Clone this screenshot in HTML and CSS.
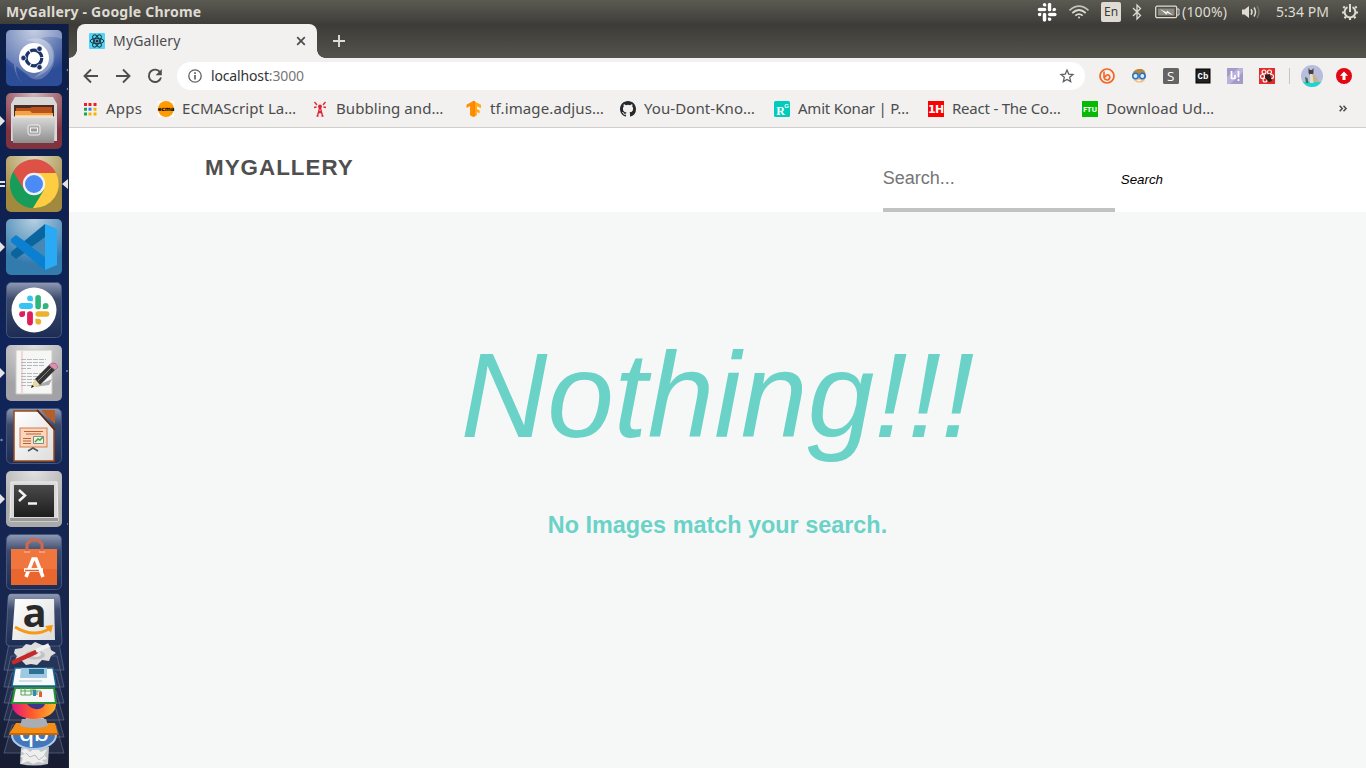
FILE: index.html
```html
<!DOCTYPE html>
<html lang="en">
<head>
<meta charset="utf-8">
<title>MyGallery</title>
<link rel="stylesheet" href="styles.css">
</head>
<body>
<svg class="defs" width="0" height="0" aria-hidden="true">
  <defs>
    <linearGradient id="glass" x1="0" y1="0" x2="0" y2="1"><stop offset="0" stop-color="#8f9ab5"/><stop offset=".3" stop-color="#3c4a6c"/><stop offset="1" stop-color="#1c2c54"/></linearGradient>
    <linearGradient id="metal" x1="0" y1="0" x2="0" y2="1"><stop offset="0" stop-color="#d9d9d9"/><stop offset="1" stop-color="#8d8d8d"/></linearGradient>
    <linearGradient id="screen" x1="0" y1="0" x2="0" y2="1"><stop offset="0" stop-color="#4a4a4a"/><stop offset="1" stop-color="#1d1d1d"/></linearGradient>
    <linearGradient id="paper" x1="0" y1="0" x2="1" y2="1"><stop offset="0" stop-color="#fff"/><stop offset="1" stop-color="#ddd"/></linearGradient>
    <linearGradient id="fox" x1="0" y1="0" x2="1" y2="0"><stop offset="0" stop-color="#e31587"/><stop offset=".45" stop-color="#ff5a2a"/><stop offset="1" stop-color="#ffb52b"/></linearGradient>
    <radialGradient id="glow" cx=".5" cy="0" r=".8"><stop offset="0" stop-color="#fff" stop-opacity=".65"/><stop offset="1" stop-color="#fff" stop-opacity="0"/></radialGradient>
    <g id="slack">
      <rect x="1.300" y="-15" width="5.600" height="14.200" rx="2.800" class="s-green"/>
      <rect x="1.400" y="1.200" width="14" height="5.600" rx="2.800" class="s-yellow"/>
      <rect x="-6.900" y="1.200" width="5.800" height="14.200" rx="2.800" class="s-red"/>
      <rect x="-15" y="-6.900" width="14" height="5.800" rx="2.800" class="s-blue"/>
      <path class="s-green" d="M8.800-1.100v-3a2.900 2.900 0 1 1 3 3z"/>
      <path class="s-yellow" d="M1.400 8.800h3a2.900 2.900 0 1 1-3 3z"/>
      <path class="s-red" d="M-9 1.200v3a2.900 2.900 0 1 1-3-3z"/>
      <path class="s-blue" d="M-1.100-8.800h-3a2.900 2.900 0 1 1 3-3z"/>
    </g>
  </defs>
</svg>

<header class="panel">
  <span class="panel-title">MyGallery - Google Chrome</span>
  <div class="tray">
    <svg class="tray-slack" width="20" height="20" viewBox="-16 -16 32 32"><use href="#slack"/></svg>
    <svg class="tray-wifi" width="22" height="16" viewBox="0 0 22 16" fill="none" stroke="#dfdbd2" stroke-width="1.700"><path d="M1.500 6.300q9.500-8.200 19 0" stroke="#c5c1b9"/><path d="M4.300 9q6.700-6 13.400 0M7.300 11.700q3.700-3.300 7.400 0"/><circle cx="11" cy="13.600" r="1" fill="#dfdbd2" stroke="none"/></svg>
    <span class="lang">En</span>
    <svg class="tray-bt" width="10" height="18" viewBox="0 0 10 18" fill="none" stroke="#dfdbd2" stroke-width="1.300"><path d="M1 5l7.500 7.500L5 16V2l3.500 3.500L1 13"/></svg>
    <svg class="tray-batt" width="25" height="14" viewBox="0 0 25 14"><rect x=".7" y="1.200" width="21" height="11.500" rx="1.500" fill="none" stroke="#dfdbd2" stroke-width="1.300"/><path d="M22 4h2v6h-2" fill="none" stroke="#dfdbd2"/><path d="M3 3.500h16.500v7H3z" fill="#8c8982"/><path d="M5 4l6.500 3.200.5-1.800L18.500 10.500l-6.200-2.400-.8 1.700z" fill="#f4f1ea"/></svg>
    <span class="tray-pct">(100%)</span>
    <svg class="tray-vol" width="20" height="16" viewBox="0 0 20 16" fill="none" stroke="#dfdbd2" stroke-width="1.500"><path d="M1 5.500h2.500L8 2v12l-4.500-3.500H1z" fill="#dfdbd2" stroke="none"/><path d="M10 5.200q2 2.800 0 5.600M13 3.500q3 4.500 0 9"/><path d="M16 1.800q4 6.200 0 12.400" stroke="#77746d"/></svg>
    <span class="tray-time">5:34 PM</span>
    <svg class="tray-gear" width="18" height="18" viewBox="-9 -9 18 18" fill="none" stroke="#dfdbd2"><path d="M-2.500-4.800a5.400 5.400 0 1 0 5 0" stroke-width="2"/><path d="M0-8V0" stroke-width="2"/><path d="M5.200-4.200l1.500-1.300M6 .5h2M4 4.500l1.500 1.700M0 6v2M-4 4.500l-1.500 1.700M-6 .5h-2M-5.200-4.200l-1.500-1.300" stroke-width="2.200"/></svg>
  </div>
</header>

<div class="desktop">
  <aside class="launcher">
    <svg class="tile" viewBox="0 0 56 56"><rect width="56" height="56" rx="5" fill="#2e4d98"/><path d="M0 28V5q0-5 5-5h46q5 0 5 5v4Q32 0 13 28q-8 14 6 28Q4 42 9 25 17 5 35 9q18 5 12 27Q38 54 25 48" fill="#c5cfe8" opacity=".3"/><path d="M20 10q22-7 27 13 3 17-19 25Q44 36 38 22 33 11 20 10" fill="#fff" opacity=".25"/><rect width="56" height="56" rx="5" fill="url(#glow)"/><circle cx="28" cy="28" r="15" fill="#fff"/><circle cx="28" cy="28" r="7.800" fill="none" stroke="#1d3469" stroke-width="3.200" stroke-dasharray="15.300 1"/><g fill="#1d3469" stroke="#fff" stroke-width=".7"><circle cx="17.500" cy="28" r="2.700"/><circle cx="33.500" cy="18.800" r="2.700"/><circle cx="33.500" cy="37.200" r="2.700"/></g></svg>
    <svg class="tile" viewBox="0 0 56 56"><rect width="56" height="56" rx="5" fill="#81323f"/><rect width="56" height="56" rx="5" fill="url(#glow)"/><path d="M9 4h38l4 7v37H5V11z" fill="#d8d8d8"/><path d="M8 12h40v14H8z" fill="#4a2d20"/><path d="M10 15h14l2-1h20v12H10z" fill="#b9531e"/><path d="M9 18h15l2 2h21v6H9z" fill="#f3a14b"/><path d="M9 22h38v4H9z" fill="#ffd187"/><path d="M6 24h43l-1 26H7z" fill="url(#metal)"/><path d="M6 24h43" stroke="#eee"/><rect x="22" y="32" width="12" height="10" rx="2" fill="#aaa" stroke="#eee"/><rect x="24.500" y="35" width="7" height="4" fill="#999" stroke="#f5f5f5"/></svg>
    <svg class="tile" viewBox="0 0 56 56"><rect width="56" height="56" rx="5" fill="#a18a3e"/><rect width="56" height="56" rx="5" fill="url(#glow)"/><circle cx="28" cy="28" r="24" fill="#179d59"/><path d="M28 28L7.200 16A24 24 0 0 1 50 17z" fill="#de5146"/><path d="M28 17h22a24 24 0 0 1-23 35l11-18z" fill="#ffcd42"/><path d="M7.300 16L18 34l10-6-8-12z" fill="#de5146"/><path d="M7.300 16L18 34l9 18A24 24 0 0 1 7.300 16z" fill="#179d59"/><circle cx="28" cy="28" r="11.200" fill="#f1f1f1"/><circle cx="28" cy="28" r="9" fill="#4c8bf5"/></svg>
    <svg class="tile" viewBox="0 0 56 56"><rect width="56" height="56" rx="5" fill="#347bad"/><rect width="56" height="56" rx="5" fill="url(#glow)"/><path d="M39 5v14L10 40l-5-4v-3z" fill="#0a659f"/><path d="M39 51V37L10 16l-5 4v3z" fill="#0b7fd0"/><path d="M39 5l12 5v36l-12 5z" fill="#2aaaf4"/><path d="M39 18v20L25.500 28z" fill="#4588b5"/></svg>
    <svg class="tile" viewBox="0 0 56 56"><rect x=".5" y=".5" width="55" height="55" rx="5" fill="url(#glass)" stroke="#46557a"/><circle cx="28" cy="28" r="22.500" fill="#fff"/><use href="#slack" transform="translate(28 28)"/></svg>
    <svg class="tile" viewBox="0 0 56 56"><rect width="56" height="56" rx="5" fill="#a3a3a7"/><rect width="56" height="56" rx="5" fill="url(#glow)"/><path d="M10 5h36v44H10z" fill="#f6f6f4" stroke="#c9c9c5"/><path d="M16 6v42" stroke="#f0b6b6"/><g stroke="#b3b8c1"><path d="M15 14.500h25M15 17.500h24M15 20.500h24M15 23.500h10M15 28.500h25M15 31.500h20M15 34.500h18M15 37.500h14M15 40.500h12" stroke-dasharray="5 1"/></g><path d="M28 42l18-8-3 6z" fill="#aaa"/><path d="M25 43l4-9 5 6z" fill="#e9d9a0"/><path d="M29 34l14-14 6 5-15 15z" fill="#343434"/><path d="M32 36l14-14" stroke="#888"/><path d="M43 20l3-2q4-1 6 4l-3 3z" fill="#df8db3" stroke="#99637a" stroke-width=".7"/><path d="M25 43l1-3 2 1.500z" fill="#111"/></svg>
    <svg class="tile" viewBox="0 0 56 56"><rect x=".5" y=".5" width="55" height="55" rx="5" fill="url(#glass)" stroke="#46557a"/><path d="M8 3h24l16 18v32H8z" fill="url(#paper)" stroke="#9b4a1c" stroke-width="1.500"/><path d="M35 2h14v14z" fill="#b65e27"/><path d="M31 2l18 20" stroke="#5c2a14" stroke-width="1.800"/><rect x="14" y="20" width="27" height="19" fill="#fbd6bd" stroke="#d37b4b"/><path d="M18 23.500h19M20 26h15M17 30.500h8M17 33h8M17 35.500h8" stroke="#bd6132" stroke-width="1.200"/><path d="M27.500 28.500h10v7h-10z" fill="#e9f5df" stroke="#888"/><path d="M29 34l3-3 2 1 3-3" stroke="#39a845" stroke-width="1.500" fill="none"/><path d="M22 43l5-3 5 3" stroke="#555" fill="none" stroke-width="1.600"/></svg>
    <svg class="tile" viewBox="0 0 56 56"><rect width="56" height="56" rx="5" fill="#aaa"/><rect width="56" height="56" rx="5" fill="url(#glow)"/><path d="M5 11h46l1 39H4z" fill="#d9d9d7" stroke="#eee"/><path d="M4 47h48v3H4z" fill="#999"/><path d="M8 14h40v32H8z" fill="url(#screen)"/><path d="M13 19l6 5.500-6 5.500M22 32.500h9" fill="none" stroke="#f3f3f3" stroke-width="2.500"/></svg>
    <svg class="tile" viewBox="0 0 56 56"><rect x=".5" y=".5" width="55" height="55" rx="5" fill="url(#glass)" stroke="#46557a"/><path d="M5 15h46v36H5z" fill="#ea662f"/><path d="M5 15h46v20H5z" fill="#f58049" opacity=".6"/><path d="M21 18V10l4-4h7l4 4v8" fill="none" stroke="#d0684a" stroke-width="3"/><path d="M18 18h6M33 18h6" stroke="#fa9c77" stroke-width="2"/><path d="M20 43L27 25h3l7 18M21 36h16" fill="none" stroke="#fff" stroke-width="3.500"/><path d="M18 36h16" stroke="#fff" stroke-width="3.500"/><path d="M19 36.500h14" stroke="#e46430" stroke-width="1.500"/></svg>
    <svg class="stack" viewBox="0 594 68 174">
      <g stroke="#7684a0" stroke-opacity=".5" fill="#8c9bbd" fill-opacity=".13"><path d="M12 725h44l8 28H4zM12 709h44l8 28H4zM12 691h44l8 29H4zM12 673h44l8 30H4zM11 656h46l7 31H4zM10 638h48l6 32H4z"/><path d="M11 594h46q3 0 3 5l2 43q0 4-4 4H10q-4 0-4-4l2-43q0-5 3-5z" fill="url(#glass)" fill-opacity="1"/></g>
      <path d="M15 599h39l1 41H12z" fill="url(#paper)"/>
      <text x="22.500" y="627" class="amazon">a</text>
      <path d="M15 627q18 11 34 2" fill="none" stroke="#f69a16" stroke-width="3"/><path d="M45 626l8-1-2 8z" fill="#f69a16"/>
      <path d="M21 748l28-1-1 17q-14 3-28 0z" fill="#c3c6c8"/><path d="M21 751l5-3 4 4 6-5 5 5 6-3-3 6 3 4-5 1 3 3-7-1-5 2-5-3-7 3 2-6-3-2 5-2z" fill="#eee"/><path d="M26 753l4 4 5-2 4 5 5-4" fill="none" stroke="#b5b9bb"/>
      <clipPath id="qb-clip"><path d="M10 735h48v16H10z"/></clipPath>
      <g clip-path="url(#qb-clip)"><ellipse cx="34" cy="735" rx="22" ry="14" fill="#4278bb" stroke="#b1cae8" stroke-width="2"/><text x="19" y="741" class="qb">qb</text></g>
      <path d="M26 718h18l3 9H22z" fill="#bfc1c4"/><path d="M23 723h24l2 5H20z" fill="#e5e5e5"/><path d="M16 723h39l3 11H9z" fill="#f58c13"/><path d="M22 719h24l2 7q-14 4-28 0z" fill="#a9adb4"/><path d="M9 733h49v2H9z" fill="#c96500"/>
      <path d="M12 704h44q0 10-14 14-8 2-16 0-14-4-14-14z" fill="url(#fox)"/><path d="M27 704h18q-2 6-10 5-5-1-8-5z" fill="#40358b"/>
      <path d="M15 688h39l2 15H12z" fill="#f7f7f7" stroke="#279334" stroke-width="2"/><path d="M21 688v7h10v-7M21 691h10M25 688v7M32 695v-5h4v5M37 695v-4h4v4" fill="none" stroke="#58a75a"/><path d="M33 690h3v6h-3z" fill="#3688b9"/><path d="M39 692h3v5h-3z" fill="#e35e36"/>
      <path d="M15 668h38l3 18H12z" fill="#f7f9fa" stroke="#1a6896" stroke-width="1.500"/><path d="M21 668h26v10H20z" fill="#9fc9e3"/><path d="M29 669h15v5H29z" fill="#2d7296"/><path d="M19 681h23" stroke="#b3c5d2"/>
      <path d="M15 649l7-1 4-4 5 1 4-3 7 3 8 1 1 4 5 3-5 3-2 5-7-1-5 5-6-1-5 1-4-4-7-1 2-4-3-3z" fill="#dedede"/><ellipse cx="35" cy="655" rx="10" ry="4.500" fill="#c2c2c2"/><ellipse cx="36" cy="654" rx="5" ry="3" fill="#e7e7e7"/><path d="M14 662l22-10" stroke="#c52a2a" stroke-width="4.500" stroke-linecap="round"/><path d="M36 651l13-6" stroke="#f1f1f1" stroke-width="4"/>
    </svg>
    <div class="marks">
      <svg width="69" height="744" viewBox="0 24 69 744"><g fill="#e4e4e4"><path d="M0 116l5 5-5 5zM0 242l5 5-5 5zM0 368l5 5-5 5zM0 494l5 5-5 5zM0 181h5v2H0zM0 185h5v2H0zM68 179l-6 5 6 5z"/></g><g fill="#6794c8"><circle cx="68" cy="70" r="1.300"/><circle cx="68" cy="89" r="1.300"/><circle cx="1.500" cy="440" r="1.200"/><circle cx="67" cy="371" r="1"/><circle cx="68" cy="524" r="1"/></g></svg>
    </div>
  </aside>

  <main class="browser">
    <div class="tabs">
      <div class="tab">
        <svg width="16" height="16" viewBox="-8 -8 16 16"><rect x="-8" y="-8" width="16" height="16" rx="1" fill="#50d5f9"/><g fill="none" stroke="#20333b" stroke-width="1"><ellipse rx="6.800" ry="2.700"/><ellipse rx="6.800" ry="2.700" transform="rotate(60)"/><ellipse rx="6.800" ry="2.700" transform="rotate(120)"/></g><circle r="1.500" fill="#20333b"/></svg>
        <span class="tab-name">MyGallery</span>
        <svg width="10" height="10" viewBox="0 0 10 10" stroke="#4a4b4b" stroke-width="1.700"><path d="M1.200 1.200l7.600 7.600M8.800 1.200L1.200 8.800"/></svg>
      </div>
      <svg class="plus" width="12" height="12" viewBox="0 0 12 12" stroke="#deded9" stroke-width="1.900"><path d="M6 0v12M0 6h12"/></svg>
    </div>

    <div class="toolbar">
      <svg class="nav" viewBox="0 0 16 16"><path d="M15 8H2M8 1.500L1.500 8 8 14.500"/></svg>
      <svg class="nav" viewBox="0 0 16 16"><path d="M1 8h13M8 1.500L14.500 8 8 14.500"/></svg>
      <svg class="nav" viewBox="0 0 16 16"><path d="M13.300 4.500A6.200 6.200 0 1 0 14 9.500"/><path d="M14.800 1v6.200H8.600z" class="solid"/></svg>
      <div class="address">
        <svg width="14" height="14" viewBox="0 0 14 14" fill="none" stroke="#5f6163" stroke-width="1.300"><circle cx="7" cy="7" r="6.200"/><path d="M7 6v4.500M7 3.300v1.600" stroke-width="1.700"/></svg>
        <span class="url">localhost<span class="port">:3000</span></span>
        <svg class="star" width="14" height="14" viewBox="0 0 14 14" fill="none" stroke="#5f6163" stroke-width="1.300"><path d="M7 1.100l1.700 4 4.300.4-3.300 2.800 1 4.300L7 10.400l-3.700 2.200 1-4.300L1 5.500l4.300-.4z"/></svg>
      </div>
      <div class="extensions">
        <svg viewBox="0 0 16 16"><circle cx="8" cy="8" r="7" fill="none" stroke="#f26522" stroke-width="1.700"/><path d="M5 3.500v6.200q1 2.600 3.600 2.300 2.400-.7 2.200-3.200-.7-2.300-3-1.800-1.600.6-1.300 2.500" fill="none" stroke="#f26522" stroke-width="1.600"/></svg>
        <svg viewBox="0 0 16 16"><path d="M1 9Q1 2 7 1h4q4 2 4 8l-1 2H2z" fill="#b8863a"/><path d="M3 6h10l1 6-3 2.500H6L2.500 12z" fill="#f4bd86"/><circle cx="4.500" cy="8" r="2.700" fill="#d9efff" stroke="#2375cf" stroke-width="1.500"/><circle cx="11.300" cy="8" r="2.700" fill="#d9efff" stroke="#2375cf" stroke-width="1.500"/><path d="M6 12q2 1.500 4 0" fill="none" stroke="#fff"/></svg>
        <svg viewBox="0 0 16 16"><rect width="16" height="16" rx="1.500" fill="#646464"/><text x="4" y="13" class="ext-s">S</text></svg>
        <svg viewBox="0 0 16 16"><rect x="1" y="1" width="14" height="14" fill="#222" stroke="#000"/><text x="2.500" y="11" class="ext-cb">Cb</text></svg>
        <svg viewBox="0 0 16 16"><rect width="16" height="16" fill="#a69aca"/><path d="M0 9L12 0h4v4L3 16H0z" fill="#bdb2da"/><path d="M4.500 3v8M8 7v4M11.500 3v6.500M4.500 10.500h3.500M11.500 11v2" stroke="#fff" stroke-width="1.700" fill="none"/></svg>
        <svg viewBox="0 0 16 16"><rect width="16" height="16" fill="#e02d2b"/><g fill="none" stroke="#fff" stroke-width="1.100"><circle cx="5" cy="4" r="2"/><circle cx="10.500" cy="4" r="2"/><circle cx="3.500" cy="8.500" r="2"/><circle cx="12.500" cy="8.500" r="2"/><circle cx="6" cy="12" r="2"/></g><path d="M6 7l5-1 2 7-3 1-4-4z" fill="#321f1d"/></svg>
      </div>
      <svg class="avatar" viewBox="0 0 22 22"><clipPath id="round"><circle cx="11" cy="11" r="11"/></clipPath><g clip-path="url(#round)"><path d="M0 0h22v22H0z" fill="#b8bdde"/><path d="M0 17h22v5H0z" fill="#20d4cf"/><path d="M9 9l3-1 5 6 1 3H9z" fill="#c3b48d"/><path d="M7.500 3l1.500 2h2l1.500-2v5l-1.500 2H9L7.500 8z" fill="#48403d"/><path d="M4 12l2.500 1 1 5H5z" fill="#39744a"/><path d="M9 9h2.500l1 9H9z" fill="#e5dec6"/></g></svg>
      <svg class="update" width="16" height="16" viewBox="0 0 16 16"><circle cx="8" cy="8" r="8" fill="#e30613"/><path d="M8 3.500l4 4.300H9.500V12h-3V7.800H4z" fill="#fff"/></svg>
    </div>

    <nav class="bookmarks">
      <div class="mark apps"><svg viewBox="0 0 16 16"><path fill="#ea1d2c" d="M2 2h3v3H2zM6.500 2h3v3h-3zM11.500 2h3v3h-3z"/><path fill="#16a45b" d="M2 6.700h3v3H2zM2 11.500h3v3H2z"/><path fill="#3e7de9" d="M6.500 6.700h3v3h-3z"/><path fill="#f5b400" d="M11.500 6.700h3v3h-3zM6.500 11.500h3v3h-3zM11.500 11.500h3v3h-3z"/></svg><span class="t-apps">Apps</span></div>
      <div class="mark"><svg viewBox="0 0 16 16"><rect width="16" height="16" fill="#fff"/><circle cx="8" cy="8" r="8" fill="#ff9b00"/><text x="8" y="10" class="fav-ecma">ecma</text></svg><span class="t-ecma">ECMAScript La…</span></div>
      <div class="mark"><svg viewBox="0 0 16 16" fill="none" stroke="#df2333" stroke-width="1.300"><path d="M8 5L5.500 15M8 5l2.500 10M6.500 10L10.500 13M9.500 10L5.500 13M4.500 15h2M9.500 15h2M5 4L2.500 1M11 4l2.500-3M4.500 6L2 6.500M11.500 6l2.500.5"/><circle cx="8" cy="5.500" r="1.300" fill="#df2333"/></svg><span class="t-bub">Bubbling and…</span></div>
      <div class="mark"><svg viewBox="0 0 16 16"><path d="M7 0v16l-3-1.800V5L.5 7V3.800z" fill="#ff8f00"/><path d="M8 0l7 3.800V7.200l-4-2V8l2.700 1.500v3L11 11v3.300L8 16z" fill="#ffab1a"/><path d="M7 0h2v15l-2 1z" fill="#ff8500"/></svg><span class="t-tf">tf.image.adjus…</span></div>
      <div class="mark"><svg viewBox="0 0 16 16"><path fill="#24292e" d="M8 0C3.580 0 0 3.580 0 8c0 3.540 2.290 6.530 5.470 7.590.4.070.55-.17.55-.38 0-.19-.01-.82-.01-1.490-2.010.37-2.530-.49-2.690-.94-.09-.23-.48-.94-.82-1.130-.28-.15-.68-.52-.01-.53.63-.01 1.080.58 1.230.82.72 1.210 1.870.87 2.330.66.07-.52.28-.87.510-1.070-1.780-.2-3.640-.89-3.640-3.950 0-.87.310-1.590.82-2.150-.08-.2-.36-1.020.08-2.120 0 0 .67-.21 2.200.82a7.600 7.600 0 0 1 4 0c1.530-1.040 2.200-.82 2.200-.82.44 1.100.16 1.920.08 2.120.51.56.82 1.270.82 2.150 0 3.070-1.870 3.750-3.650 3.950.29.25.54.73.54 1.480 0 1.070-.01 1.930-.01 2.200 0 .21.15.46.55.38A8 8 0 0 0 16 8c0-4.420-3.580-8-8-8z"/></svg><span class="t-you">You-Dont-Kno…</span></div>
      <div class="mark"><svg viewBox="0 0 16 16"><rect width="16" height="16" rx="1.500" fill="#00ccbb"/><text x="2.300" y="13.500" class="fav-r">R</text><text x="10.300" y="6.500" class="fav-g">G</text></svg><span class="t-amit">Amit Konar | P…</span></div>
      <div class="mark"><svg viewBox="0 0 16 16"><rect width="16" height="16" fill="#fb0000"/><text x="7.800" y="12" class="fav-h">1H</text></svg><span class="t-react">React - The Co…</span></div>
      <div class="mark"><svg viewBox="0 0 16 16"><rect width="16" height="16" fill="#06ba06"/><text x="8" y="11" class="fav-f">FTU</text></svg><span class="t-down">Download Ud…</span></div>
      <svg class="more" width="8" height="7" viewBox="0 0 8 7" fill="none" stroke="#4a4b4b" stroke-width="1.500"><path d="M.7.7L3.300 3.500.7 6.300M4.500.7l2.600 2.800-2.600 2.800"/></svg>
    </nav>

    <div class="site">
      <div class="site-head">
        <div class="brand">MYGALLERY</div>
        <form class="search">
          <input class="field" type="text" placeholder="Search...">
          <button class="go" type="button">Search</button>
        </form>
      </div>
      <section class="empty">
        <div class="big">Nothing!!!</div>
        <div class="note">No Images match your search.</div>
      </section>
    </div>
  </main>
</div>
</body>
</html>
```
FILE: styles.css
```css
* { box-sizing: border-box; }
body { margin: 0; width: 1366px; height: 768px; overflow: hidden; font-family: "Noto Sans", "Open Sans", sans-serif; }
svg { display: block; flex: none; overflow: visible; }
span { white-space: nowrap; }
.defs { position: absolute; }

.s-green { fill: #2fb67c; }
.s-yellow { fill: #ecb22e; }
.s-red { fill: #e01e5a; }
.s-blue { fill: #36c5f0; }

.panel { height: 24px; display: flex; justify-content: space-between; align-items: center; padding: 0 7px 0 6px; color: #dfdbd2; background: linear-gradient(#5b5a52, #3e3d39); }
.panel-title { font-size: 14px; font-weight: 700; letter-spacing: .22px; line-height: 24px; }
.tray { display: flex; align-items: center; font-size: 14px; line-height: 24px; }
.tray-slack { margin-right: 11px; }
.tray-slack use { filter: brightness(0) invert(1) drop-shadow(0 0 1px #000); }
.tray-wifi { margin-right: 11px; }
.lang { width: 20px; height: 20px; margin-right: 11px; border-radius: 2px; background: #dfdbd2; color: #3c3b37; font-size: 12px; line-height: 20px; text-align: center; }
.tray-bt { margin-right: 13px; }
.tray-batt { margin-right: 2px; }
.tray-pct { width: 48px; letter-spacing: .2px; margin-right: 11px; }
.tray-vol { margin-right: 15px; }
.tray-time { width: 54px; letter-spacing: .05px; margin-right: 11px; }

.desktop { display: flex; height: 744px; }
.launcher { position: relative; width: 69px; padding: 6px 0 0 6px; display: flex; flex-direction: column; gap: 7px; background: linear-gradient(#0d1e47, #10245a 45%, #19264c 85%, #171c31); border-right: 1px solid #252734; overflow: hidden; }
.tile { width: 56px; height: 56px; }
.stack { width: 68px; height: 174px; margin: -3px 0 0 -6px; }
.marks { position: absolute; inset: 0 auto auto 0; }
.amazon { font: 700 40px "Open Sans", sans-serif; fill: #292929; }
.qb { font: 27px "Liberation Sans", sans-serif; fill: #fff; }

.browser { width: 1297px; display: flex; flex-direction: column; background: #f2f1f0; }
.tabs { height: 34px; display: flex; align-items: center; padding-left: 8px; background: linear-gradient(#3c3b37, #54534b); }
.tab { position: relative; width: 240px; height: 34px; padding: 0 11px 0 12px; display: flex; align-items: center; background: #f2f1f0; border-radius: 8px 8px 0 0; }
.tab::before, .tab::after { content: ""; position: absolute; bottom: 0; width: 8px; height: 8px; }
.tab::before { left: -8px; background: radial-gradient(circle at 0 0, transparent 7.5px, #f2f1f0 8px); }
.tab::after { right: -8px; background: radial-gradient(circle at 100% 0, transparent 7.5px, #f2f1f0 8px); }
.tab-name { flex: 1; margin-left: 8px; padding-bottom: 2px; font-size: 14px; letter-spacing: .18px; color: #4c4d4e; }
.plus { margin-left: 16px; }

.toolbar { height: 36px; display: flex; align-items: center; padding: 0 14px; }
.nav { width: 16px; height: 16px; margin-right: 16px; fill: none; stroke: #4d4e50; stroke-width: 1.9; }
.nav .solid { fill: #4d4e50; stroke: none; }
.nav:nth-child(3) { margin-right: 14px; }
.address { width: 908px; height: 28px; display: flex; align-items: center; padding: 0 11px; border-radius: 14px; background: #fff; }
.url { flex: 1; margin-left: 9px; padding-bottom: 2px; font-size: 14px; letter-spacing: -.15px; color: #333; }
.port { color: #777; }
.extensions { width: 205px; padding-left: 14px; display: flex; gap: 16px; border-right: 1px solid #c7c6c5; height: 16px; margin-right: 11px; }
.extensions svg { width: 16px; height: 16px; }
.avatar { width: 22px; height: 22px; margin-right: 13px; }
.ext-s { font: 13.500px "Open Sans", sans-serif; fill: #fff; }
.ext-cb { font: 700 9px "Liberation Mono", monospace; fill: #fff; }

.bookmarks { height: 34px; display: flex; align-items: center; padding: 0 19px 4px 13px; border-bottom: 1px solid #cfcecd; }
.mark { width: 154px; display: flex; align-items: center; gap: 8px; font-size: 15px; line-height: 20px; color: #4b4c4d; }
.mark span { padding-bottom: 2px; }
.mark.apps { width: 76px; }
.mark svg { width: 16px; height: 16px; }
.t-apps { letter-spacing: .2px; }
.t-ecma, .t-you, .t-bub, .t-down { letter-spacing: .08px; }
.t-tf { letter-spacing: .12px; }
.t-amit, .t-react { letter-spacing: -.22px; }
.more { margin-left: auto; }
.fav-ecma { font: 700 5.8px "DejaVu Sans", sans-serif; text-anchor: middle; letter-spacing: -.2px; }
.fav-r { font: 700 12px "Liberation Serif", serif; fill: #fff; }
.fav-g { font: 700 6px "Liberation Sans", sans-serif; fill: #fff; }
.fav-h { font: 700 11px "DejaVu Sans", sans-serif; fill: #fff; text-anchor: middle; letter-spacing: -.6px; }
.fav-f { font: 700 7.5px "Open Sans", sans-serif; fill: #fff; text-anchor: middle; }

.site { flex: 1; background: #f6f8f7; font-family: "Liberation Sans", Arial, sans-serif; }
.site-head { height: 84px; display: flex; justify-content: space-between; padding: 0 203px 0 136px; background: #fff; }
.brand { padding-top: 27px; font-size: 22.4px; line-height: 25px; font-weight: 700; letter-spacing: 1px; color: #4f4f4f; }
.search { display: flex; align-items: flex-start; gap: 6px; margin: 0; height: 84px; }
.field { width: 232px; height: 84px; padding: 20px 0 0; border: 0; border-bottom: 4px solid #c2c2c2; background: none; font: 18px "Liberation Sans", Arial, sans-serif; outline: none; }
.field::placeholder { color: #757575; opacity: 1; }
.go { margin-top: 44px; padding: 0; border: 0; background: none; color: #000; font: italic 13.333px/15px "Liberation Sans", Arial, sans-serif; }
.empty { display: flex; flex-direction: column; align-items: center; padding-top: 114px; color: #6ad2c7; }
.big { font-size: 120px; line-height: 138px; font-style: italic; }
.note { margin-top: 48px; font-size: 23.4px; line-height: 26px; font-weight: 700; }
```
